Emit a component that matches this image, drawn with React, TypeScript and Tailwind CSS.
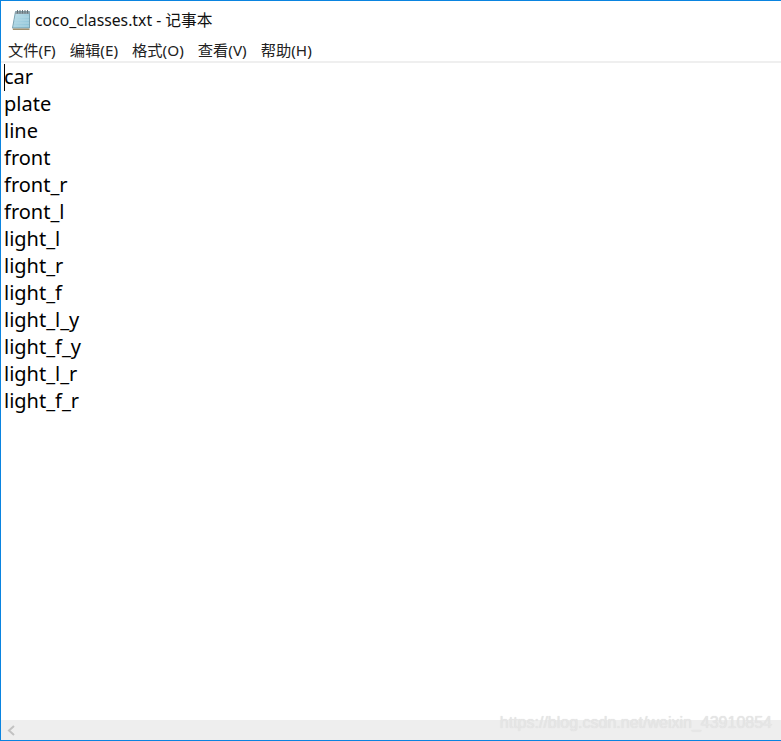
const LINES = ["car", "plate", "line", "front", "front_r", "front_l", "light_l", "light_r", "light_f", "light_l_y", "light_f_y", "light_l_r", "light_f_r"];
const MENUS = ["文件(F)", "编辑(E)", "格式(O)", "查看(V)", "帮助(H)"];
const CJK = "font-['Noto_Sans','Noto_Sans_CJK_SC',sans-serif]";

function NotepadIcon() {
  return (
    <svg width="20" height="22" viewBox="0 0 20 22" className="shrink-0">
      <defs>
        <linearGradient id="page" x1="0" y1="0" x2="1" y2="1">
          <stop offset="0" stopColor="#c6e4ee" />
          <stop offset="1" stopColor="#86bfd4" />
        </linearGradient>
      </defs>
      <path d="M4.5 2.5 L18.5 2.5 L18.5 19 L1.5 19 Z" fill="url(#page)" stroke="#7ca4b2" strokeWidth="1" />
      <path d="M1.5 19.5 L18.5 19.5 L18.5 21 L2 21 Z" fill="#a0906e" />
      <path d="M4 8 L18 8 M3.5 11 L18 11 M3 14 L18 14 M2.5 17 L18 17" stroke="#b4d9e5" strokeWidth="1" />
      <path d="M4.5 2.5 L18.5 2.5 L18.5 5 L4 5 Z" fill="#8fa0a8" />
      <path d="M6.5 1 V4.5 M9 1 V4.5 M11.5 1 V4.5 M14 1 V4.5 M16.5 1 V4.5" stroke="#66747b" strokeWidth="1" />
    </svg>
  );
}

export default function App() {
  return (
    <div className={`flex h-[741px] w-[781px] flex-col overflow-hidden border-t border-b border-l border-[#0a84e0] bg-white text-black ${CJK}`}>
      {/* 标题栏 */}
      <div className="flex h-[36px] shrink-0 items-center gap-[4px] pl-[10px] pt-[2px]">
        <NotepadIcon />
        <span className="pt-[2px] text-[15.75px] leading-none text-[#111]">coco_classes.txt - 记事本</span>
      </div>

      {/* 菜单 */}
      <div className="flex h-[24px] shrink-0 items-center gap-[14px] pl-[7px] pt-[4px] text-[15.3px] leading-none text-[#222]">
        {MENUS.map((m) => (
          <span key={m}>{m}</span>
        ))}
      </div>
      <div className="h-[2px] shrink-0 bg-[#efefef]" />

      {/* 文本区 */}
      <div className="relative min-h-0 flex-1 pl-[3px] text-[20px] leading-[27px]">
        <div className="absolute left-[3px] top-[1px] h-[27px] w-px bg-black" />
        {LINES.map((l) => (
          <div key={l}>{l}</div>
        ))}
      </div>

      {/* 滚动条 */}
      <div className="relative flex h-[20px] shrink-0 items-center bg-[#eeeeee] pl-[6px]">
        <svg width="9" height="11" viewBox="0 0 9 11">
          <path d="M7 1 L2 5.5 L7 10" fill="none" stroke="#c2c2c2" strokeWidth="2" />
        </svg>
        <span className="absolute right-[9px] top-[-5px] font-['Liberation_Sans',sans-serif] text-[16px] leading-none text-[#e6e6e6] [text-shadow:0_0_1px_#d8d8d8]">
          https://blog.csdn.net/weixin_43910854
        </span>
      </div>
    </div>
  );
}
